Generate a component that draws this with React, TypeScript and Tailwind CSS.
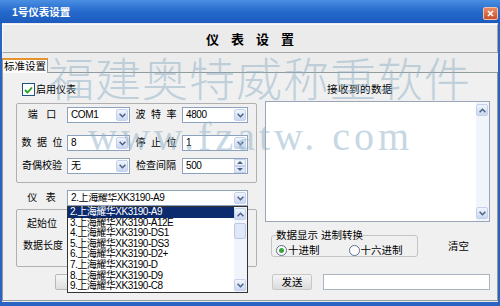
import React from 'react'

const instruments = [
  '2.上海耀华XK3190-A9',
  '3.上海耀华XK3190-A12E',
  '4.上海耀华XK3190-DS1',
  '5.上海耀华XK3190-DS3',
  '6.上海耀华XK3190-D2+',
  '7.上海耀华XK3190-D',
  '8.上海耀华XK3190-D9',
  '9.上海耀华XK3190-C8',
]

function Chevron({ up = false }: { up?: boolean }) {
  return (
    <svg width="7" height="5" viewBox="0 0 7 5">
      <path
        d={up ? 'M0.6 4.2L3.5 1.3L6.4 4.2' : 'M0.6 0.8L3.5 3.7L6.4 0.8'}
        fill="none"
        stroke="#4d6185"
        strokeWidth="1.5"
      />
    </svg>
  )
}

function ArrowBtn({ up = false }: { up?: boolean }) {
  return (
    <div className="w-[12px] h-[12px] flex items-center justify-center rounded-[2px] border border-[#c3d1ea] bg-gradient-to-b from-[#f1f5fd] to-[#c9d7f1]">
      <Chevron up={up} />
    </div>
  )
}

function Combo({ value, className }: { value: string; className: string }) {
  return (
    <div className={`${className} h-[16px] flex items-center bg-white border border-[#8da2bc]`}>
      <span className="flex-1 pl-[3px] text-[10px] tracking-[-0.4px] leading-none whitespace-nowrap overflow-hidden">{value}</span>
      <div className="mr-px">
        <ArrowBtn />
      </div>
    </div>
  )
}

function Spin({ value, className }: { value: string; className: string }) {
  return (
    <div className={`${className} h-[16px] flex items-center bg-white border border-[#8da2bc]`}>
      <span className="flex-1 pl-[3px] text-[10px] tracking-[-0.4px] leading-none">{value}</span>
      <div className="mr-px w-[12px] h-[14px] flex flex-col">
        <div className="flex-1 flex items-center justify-center border border-[#c3d1ea] bg-[#eef2fa]">
          <div className="w-0 h-0 border-x-[3px] border-x-transparent border-b-[3px] border-b-[#4d6185]" />
        </div>
        <div className="flex-1 flex items-center justify-center border border-[#c3d1ea] bg-[#dfe7f6]">
          <div className="w-0 h-0 border-x-[3px] border-x-transparent border-t-[3px] border-t-[#4d6185]" />
        </div>
      </div>
    </div>
  )
}

function Row({ l1, v1, l2, right }: { l1: string; v1: string; l2: string; right: React.ReactNode }) {
  return (
    <div className="flex items-center">
      <span className="w-[50px] text-center text-[10px] leading-none whitespace-pre">{l1}</span>
      <Combo value={v1} className="w-[63px]" />
      <span className="w-[52px] text-center text-[10px] leading-none whitespace-pre">{l2}</span>
      {right}
    </div>
  )
}

function Radio({ checked, label }: { checked?: boolean; label: string }) {
  return (
    <div className="flex items-center">
      <div className="w-[11px] h-[11px] rounded-full border border-[#5a6f8c] bg-white flex items-center justify-center">
        {checked && <div className="w-[5px] h-[5px] rounded-full bg-[#3aa33a]" />}
      </div>
      <span className="ml-[1px] text-[10.5px] leading-none">{label}</span>
    </div>
  )
}

export default function App() {
  return (
    <div className="relative w-[500px] h-[306px] overflow-hidden bg-[#2a64c2] text-black font-['Liberation_Sans','Noto_Sans_CJK_SC',sans-serif]">
      {/* title bar */}
      <div className="h-[23px] flex bg-gradient-to-b from-[#4a8fe2] via-[#2569cc] to-[#1c5bbd]">
        <span className="ml-[12px] mt-[6px] text-white font-bold text-[10.5px] leading-[13px]">1号仪表设置</span>
        <div className="ml-auto mr-[2px] mt-[7px] w-[15px] h-[13px] rounded-[2px] border border-[#f3c0a8] bg-gradient-to-b from-[#e98a64] to-[#c8502c] flex items-center justify-center">
          <svg width="7" height="7" viewBox="0 0 7 7">
            <path d="M1 1L6 6M6 1L1 6" stroke="#fff" strokeWidth="1.6" />
          </svg>
        </div>
      </div>

      <div className="mx-[2px] h-[279px] bg-[#ececec] flex flex-col">
        {/* header */}
        <div className="mt-px h-[29px] border border-[#a5a5a5] border-t-[#fafafa] border-l-[#fafafa] bg-[#ebebeb] flex items-center justify-center">
          <span className="pl-[12px] pt-[2px] text-[13px] font-bold tracking-[12px] leading-none">仪表设置</span>
        </div>

        {/* tab */}
        <div className="mt-[5px] w-[46px] h-[15px] -mb-px relative z-10 border border-b-0 border-[#919b9c] border-t-2 border-t-[#e8922e] bg-[#fbfbfb] text-[10.5px] leading-[12px] text-center">
          标准设置
        </div>

        <div className="h-[229px] border border-[#919b9c] bg-[#f0f0f0] flex">
          {/* left column */}
          <div className="ml-[13px] w-[241px] flex flex-col">
            <div className="mt-[10px] h-[13px] ml-[6px] flex items-center">
              <div className="w-[13px] h-[13px] border border-[#1c5180] bg-white flex items-center justify-center">
                <svg width="9" height="8" viewBox="0 0 9 8">
                  <path d="M1 4L3.5 6.5L8 1.5" fill="none" stroke="#21a121" strokeWidth="1.8" />
                </svg>
              </div>
              <span className="ml-px text-[10px] leading-none">启用仪表</span>
            </div>

            <div className="mt-[7px] h-[80px] border border-[#b0b0b0] rounded-[2px] flex flex-col pt-[3px]">
              <Row l1="端   口" v1="COM1" l2="波  特  率" right={<Combo value="4800" className="w-[66px]" />} />
              <div className="mt-[12px]">
                <Row l1="数  据  位" v1="8" l2="停  止  位" right={<Combo value="1" className="w-[66px]" />} />
              </div>
              <div className="mt-[7px]">
                <Row l1="奇偶校验" v1="无" l2="检查间隔" right={<Spin value="500" className="w-[66px]" />} />
              </div>
            </div>

            <div className="mt-[7px] flex items-center">
              <span className="w-[51px] text-center text-[10px] leading-none whitespace-pre">仪   表</span>
              <Combo value={instruments[0]} className="w-[181px]" />
            </div>

            <div className="mt-[3px] h-[58px] border border-[#b0b0b0] rounded-[2px] flex flex-col pt-[8px]">
              <span className="ml-[10px] text-[10px] leading-[12px]">起始位</span>
              <span className="ml-[6px] mt-[10px] text-[10px] leading-[12px]">数据长度</span>
            </div>

            <div className="mt-[7px] ml-[39px] w-[110px] h-[16px] border border-[#b8b8b8] rounded-[2px] bg-gradient-to-b from-[#f6f6f6] to-[#dedede]" />
          </div>

          {/* right column */}
          <div className="ml-[8px] w-[225px] flex flex-col">
            <span className="mt-[10px] pl-[62px] text-[10.5px] leading-[12px] tracking-[0.5px]">接收到的数据</span>
            <div className="mt-[6px] h-[121px] border border-[#9aa7b8] bg-white flex justify-end">
              <div className="w-[13px] h-full bg-[#f1f4fb] flex flex-col justify-between py-[2px] pr-px">
                <ArrowBtn up />
                <ArrowBtn />
              </div>
            </div>

            <div className="mt-[7px] flex items-start">
              <fieldset className="ml-[6px] w-[147px] h-[28px] border border-[#c4c4c4] rounded-[3px] px-[4px]">
                <legend className="text-[10.5px] leading-[12px]">数据显示 进制转换</legend>
                <div className="mt-[4px] flex items-center gap-[29px]">
                  <Radio checked label="十进制" />
                  <Radio label="十六进制" />
                </div>
              </fieldset>
              <span className="ml-[30px] mt-[11px] text-[10.5px] leading-[12px]">清空</span>
            </div>

            <div className="mt-[17px] flex items-center">
              <div className="ml-[7px] w-[40px] h-[16px] border border-[#c8c8c8] rounded-[2px] bg-gradient-to-b from-[#f4f4f4] to-[#dcdcdc] flex items-center justify-center text-[10.5px] leading-none">
                发送
              </div>
              <div className="ml-[11px] w-[167px] h-[16px] border border-[#a9b4c2] bg-white" />
            </div>
          </div>
        </div>
      </div>

      {/* open dropdown list */}
      <div className="absolute left-[67px] top-[206px] w-[181px] h-[87px] border border-[#333] bg-white flex">
        <div className="flex-1 flex flex-col">
          {instruments.map((t, i) => (
            <div
              key={t}
              className={`h-[10.6px] pl-[2px] text-[10px] tracking-[-0.5px] leading-[10.6px] whitespace-nowrap ${i === 0 ? 'bg-[#0c2a6e] text-white' : ''}`}
            >
              {t}
            </div>
          ))}
        </div>
        <div className="w-[13px] bg-[#f1f4fb] flex flex-col py-px pr-px">
          <ArrowBtn up />
          <div className="mt-[3px] h-[16px] w-[12px] border border-[#b9c9e6] rounded-[2px] bg-[#dfe8f7]" />
          <div className="mt-auto">
            <ArrowBtn />
          </div>
        </div>
      </div>

      {/* watermark */}
      <div className="pointer-events-none absolute left-[48px] top-[53px] text-[46px] font-light leading-none tracking-[1px] text-[#8fb2c8] opacity-50 font-['Noto_Sans_CJK_SC',sans-serif]">
        福建奥特威称重软件
      </div>
      <div className="pointer-events-none absolute left-[88px] top-[117px] text-[40px] leading-none tracking-[4px] text-[#8fb2c8] opacity-50 font-['Liberation_Serif',serif] whitespace-pre">
        www.fzatw. com
      </div>
    </div>
  )
}
